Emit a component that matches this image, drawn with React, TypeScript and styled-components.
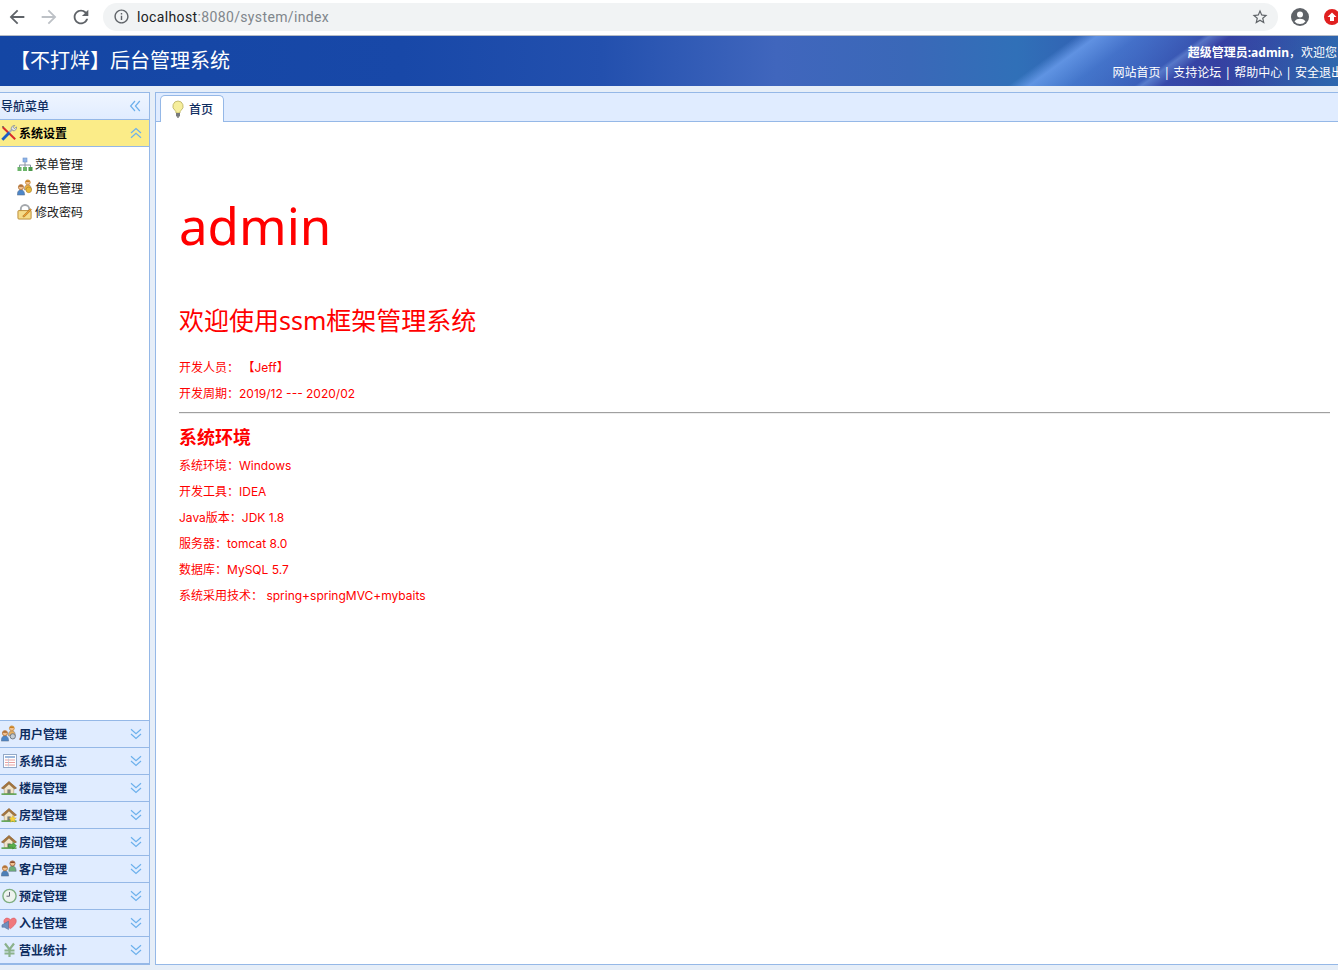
import React from "react";
import styled, { createGlobalStyle } from "styled-components";

const FONT = `"Noto Sans", "Noto Sans CJK SC", sans-serif`;

const Global = createGlobalStyle`
  html, body { margin: 0; padding: 0; height: 100%; overflow: hidden; background: #e6eef8; }
  #root { height: 100%; }
  * { box-sizing: border-box; }
`;

const Page = styled.div`
  width: 1338px; height: 970px; display: flex; flex-direction: column; overflow: hidden;
  font-family: ${FONT}; background: #e6eef8;
`;

const BrowserBar = styled.div`
  height: 36px; flex: none; display: flex; align-items: center; background: #fff;
  border-bottom: 1px solid #b6bcc6; padding: 0 0 2px 6px;
`;
const NavSlot = styled.span`
  flex: none; width: 32px; height: 22px; display: flex; align-items: center; justify-content: flex-start;
`;
const AddressPill = styled.div`
  flex: none; margin-left: 1px; width: 1175px; height: 28px; border-radius: 14px; background: #f1f3f4;
  display: flex; align-items: center; padding: 0 9px 0 10px; font-size: 14px; color: #80868b;
  font-family: "Roboto", sans-serif; letter-spacing: 0.36px;
`;
const Host = styled.span`color: #202124; margin-left: 7px;`;
const Spacer = styled.span`flex: 1;`;
const StatusIcons = styled.div`display: flex; flex: none; align-items: center; margin-left: 13px; gap: 15px;`;

const Header = styled.header`
  height: 50px; flex: none; display: flex; align-items: center; justify-content: space-between;
  padding-left: 12px; color: #fff; overflow: hidden;
  background:
    linear-gradient(144deg, transparent 76.5%, rgba(115,165,245,.7) 78%, rgba(85,135,225,.5) 81%, rgba(70,110,205,.35) 85.5%, rgba(130,170,240,.45) 86%, rgba(60,60,170,.35) 87.5%, transparent 96%),
    linear-gradient(90deg, #1446a4 0%, #1848a8 30%, #2350ae 45%, #4066bd 58%, #3a68b8 68%, #3070b8 76%, #3358b0 85%, #33429e 91%, #2e68ae 100%);
`;
const Title = styled.h1`
  margin: 0 0 2px -2px; font-size: 20px; font-weight: 400; line-height: 28px;
  font-family: "Noto Sans CJK SC", sans-serif;
`;
const UserBox = styled.div`
  flex: none; margin-right: -5px; text-align: right; font-size: 12px; line-height: 20px; padding-top: 3px;
  white-space: nowrap;
`;
const Greeting = styled.div`padding-right: 6px; b { font-weight: 700; }`;

const Body = styled.div`
  flex: 1; min-height: 0; display: flex; gap: 5px; padding: 6px 0 5px 0;
`;

const Side = styled.aside`
  width: 150px; flex: none; display: flex; flex-direction: column;
  border-right: 1px solid #95b8e7; border-top: 1px solid #95b8e7; border-bottom: 2px solid #95b8e7;
  background: #fff;
`;
const SideHead = styled.div`
  height: 26px; flex: none; display: flex; align-items: center; justify-content: space-between;
  padding: 0 8px 0 1px; font-size: 12px; color: #0e2d5f; font-weight: 500;
  background: linear-gradient(180deg, #eff5ff, #e0ecff);
`;
const AccTitle = styled.div<{ $active?: boolean }>`
  height: 27px; flex: none; display: flex; align-items: center; padding: 0 7px 0 1px;
  border-top: 1px solid #95b8e7; font-size: 12px; font-weight: 700;
  background: ${p => (p.$active ? "#fbec88" : "#e0ecff")};
  color: ${p => (p.$active ? "#000" : "#0e2d5f")};
`;
const AccName = styled.span`flex: 1; margin-left: 2px; margin-bottom: 1px;`;
const ActiveBody = styled.div`
  flex: 1; min-height: 0; border-top: 1px solid #95b8e7; padding-top: 5px; background: #fff;
`;
const Leaf = styled.div`
  height: 24px; display: flex; align-items: center; padding-left: 17px; gap: 2px;
  font-size: 12px; color: #1a1a1a;
`;
const IconBox = styled.span`width: 16px; height: 16px; display: flex; flex: none;`;

const Main = styled.main`
  flex: 1; min-width: 0; display: flex; flex-direction: column;
  border: 1px solid #95b8e7; border-right: none; background: #fff;
`;
const TabBar = styled.div`
  height: 29px; flex: none; background: #e0ecff; border-bottom: 1px solid #95b8e7;
  padding: 2px 0 0 4px; display: flex;
`;
const Tab = styled.div`
  width: 64px; height: 27px; background: #fff; border: 1px solid #95b8e7; border-bottom: none;
  border-radius: 5px 5px 0 0; display: flex; align-items: center; padding-left: 9px; gap: 3px;
  font-size: 12px; color: #0e2d5f; font-weight: 500;
`;
const Content = styled.div`
  flex: 1; padding: 0 8px 0 23px; color: #f00; display: flex; flex-direction: column;
  font-family: "Inter", "Noto Sans CJK SC", sans-serif;
`;
const Big = styled.h1`
  margin: 70px 0 0; font-size: 51px; line-height: 66px; font-weight: 400;
  font-family: ${FONT};
`;
const Sub = styled.h2`
  margin: 44px 0 0; font-size: 25px; line-height: 36px; font-weight: 400;
  font-family: ${FONT};
`;
const Line = styled.p<{ $mt?: number }>`
  margin: ${p => p.$mt ?? 0}px 0 0; font-size: 12px; line-height: 26px; white-space: pre;
`;
const Rule = styled.hr`
  margin: 5px 0 0; border: none; border-top: 1px solid #a0a0a0; border-bottom: 1px solid #eee; height: 2px; width: 100%;
`;
const H3 = styled.h3`
  margin: 10px 0 3px; font-size: 18px; line-height: 26px; font-weight: 700;
  font-family: ${FONT};
`;

const Mat = ({ d, size, color }: { d: string; size: number; color: string }) => (
  <svg width={size} height={size} viewBox="0 0 24 24"><path d={d} fill={color} /></svg>
);
const ARROW_BACK = "M20 11H7.83l5.59-5.59L12 4l-8 8 8 8 1.41-1.41L7.83 13H20v-2z";
const ARROW_FWD = "M12 4l-1.41 1.41L16.17 11H4v2h12.17l-5.58 5.59L12 20l8-8z";
const REFRESH = "M17.65 6.35A7.958 7.958 0 0 0 12 4c-4.42 0-7.99 3.58-7.99 8s3.57 8 7.99 8c3.73 0 6.84-2.55 7.73-6h-2.08A5.99 5.99 0 0 1 12 18c-3.31 0-6-2.69-6-6s2.69-6 6-6c1.66 0 3.14.69 4.22 1.78L13 11h7V4l-2.35 2.35z";
const STAR = "M22 9.24l-7.19-.62L12 2 9.19 8.63 2 9.24l5.46 4.73L5.82 21 12 17.27 18.18 21l-1.63-7.03L22 9.24zM12 15.4l-3.76 2.27 1-4.28-3.32-2.88 4.38-.38L12 6.1l1.71 4.04 4.38.38-3.32 2.88 1 4.28L12 15.4z";
const INFO = "M11 7h2v2h-2zm0 4h2v6h-2zm1-9C6.48 2 2 6.48 2 12s4.48 10 10 10 10-4.48 10-10S17.52 2 12 2zm0 18c-4.41 0-8-3.59-8-8s3.59-8 8-8 8 3.59 8 8-3.59 8-8 8z";

const Chevrons = ({ dir }: { dir: "up" | "down" | "left" }) => {
  const rot = dir === "down" ? 0 : dir === "up" ? 180 : 90;
  return (
    <svg width="12" height="12" viewBox="0 0 12 12">
      <g transform={`rotate(${rot} 6 6)`} fill="none" stroke="#6cb0ec" strokeWidth="1.2">
        <path d="M1 1.2 L6 5.6 L11 1.2" />
        <path d="M1 6 L6 10.4 L11 6" />
      </g>
    </svg>
  );
};

const Tools = () => (
  <svg width="18" height="18" viewBox="0 0 18 18" style={{ marginTop: -1 }}>
    <path d="M2 2.500 L16 16" stroke="#d92b2b" strokeWidth="2.300" />
    <path d="M1 1 L3.500 1.800 L2 3.500z" fill="#555" />
    <path d="M9 8.500 L13.500 4" stroke="#aab0b8" strokeWidth="2.200" />
    <path d="M11.500 4 A3.600 3.600 0 0 1 15.500 .5 L13.700 2.500 L15 4 L17.500 2.200 A3.600 3.600 0 0 1 13.500 6.500z" fill="#e4e7ec" stroke="#767d88" strokeWidth=".8" />
    <path d="M1.500 16.500 L9.500 8.500" stroke="#1c5fc4" strokeWidth="3.200" />
  </svg>
);
const OrgIcon = () => (
  <svg width="16" height="16" viewBox="0 0 16 16">
    <rect x="6" y="2" width="4" height="4" fill="#8db4e8" stroke="#6f93c8" strokeWidth=".6" />
    <path d="M8 6v3M2.500 11V9h11v2M8 9v2" fill="none" stroke="#8a94a4" />
    <rect x="0.500" y="11" width="4" height="4" fill="#6bb56a" />
    <rect x="6" y="11" width="4" height="4" fill="#6bb56a" />
    <rect x="11.500" y="11" width="4" height="4" fill="#4d9a4c" />
  </svg>
);
const Person = ({ x, y, s, c, hair = "#a8672c" }: { x: number; y: number; s: number; c: string; hair?: string }) => (
  <g transform={`translate(${x} ${y}) scale(${s})`}>
    <path d="M.3 11 C.3 7 2 5.600 4 5.600 S7.700 7 7.700 11z" fill={c} stroke="#5a6a80" strokeWidth=".5" />
    <circle cx="4" cy="3" r="2.600" fill="#f0c090" stroke={hair} strokeWidth=".7" />
    <path d="M1.500 2.600 A2.600 2.600 0 0 1 6.500 2.600z" fill={hair} />
  </g>
);
const RoleIcon = () => (
  <svg width="17" height="17" viewBox="0 0 17 17" style={{ marginTop: -1 }}>
    <Person x={7.500} y={0} s={1} c="#f0b040" hair="#c88020" />
    <Person x={0} y={5} s={1.050} c="#4d86c8" />
    <circle cx="12.500" cy="11" r="3" fill="#e8b83a" stroke="#a87a1c" strokeWidth=".6" />
  </svg>
);
const UserIcon = () => (
  <svg width="17" height="17" viewBox="0 0 17 17" style={{ marginTop: -1 }}>
    <Person x={7.500} y={0} s={1} c="#e8b060" hair="#c88020" />
    <Person x={0} y={5} s={1.050} c="#4d86c8" />
    <circle cx="12.500" cy="11.500" r="2.800" fill="#c4ccd4" stroke="#6c7680" strokeWidth="1" />
  </svg>
);
const LockIcon = () => (
  <svg width="17" height="16" viewBox="0 0 17 16">
    <path d="M4 7V5a4.500 4.500 0 0 1 9 0v2" fill="none" stroke="#a4a8ac" strokeWidth="2" />
    <rect x="1" y="6.500" width="14" height="9" rx="1" fill="#f6dc88" stroke="#b98a34" />
    <path d="M6 12.500l1.500 1L15.500 5.500 14 4.500z" fill="#f0a030" stroke="#8a5a1a" strokeWidth=".5" />
  </svg>
);
const LogIcon = () => (
  <svg width="16" height="16" viewBox="0 0 16 16">
    <rect x="2.500" y="1.500" width="13" height="13" fill="#fff" stroke="#93a9c8" />
    <rect x="4" y="3" width="10" height="2" fill="#9db8dc" />
    <path d="M4 7h10M4 9.500h10M4 12h10" stroke="#e8a0a0" strokeWidth="1" />
    <path d="M7.500 5.500v8" stroke="#bcd" strokeWidth=".8" />
  </svg>
);
const House = ({ badge }: { badge?: "star" | "arrow" }) => (
  <svg width="17" height="16" viewBox="0 0 17 16">
    <path d="M3.500 8.500 L8.500 4 L13.500 8.500 V14 H3.500z" fill="#f2e4c8" stroke="#a08a66" strokeWidth=".5" />
    <path d="M8.500 1 L.5 8 L2.500 9 L8.500 3.500 L14.500 9 L16.500 8 Z" fill="#a8763c" stroke="#7c5220" strokeWidth=".6" />
    <rect x="6.800" y="9.500" width="3.400" height="4.500" fill="#7d7d78" />
    <path d="M0.500 14.500h16" stroke="#4d9a3c" strokeWidth="1.500" />
    {badge === "star" && <path d="M12.500 8.500l1.200 2.400 2.600.3-1.900 1.800.5 2.600-2.400-1.300-2.400 1.300.5-2.600-1.900-1.800 2.600-.3z" fill="#f5d23c" stroke="#d0a020" strokeWidth=".4" />}
    {badge === "arrow" && <path d="M8 10.500h4.500V8.500L16.500 12l-4 3.500v-2H8z" fill="#58b04a" stroke="#2e7a28" strokeWidth=".5" />}
  </svg>
);
const CustomerIcon = () => (
  <svg width="17" height="17" viewBox="0 0 17 17" style={{ marginTop: -1 }}>
    <Person x={8} y={0} s={1.050} c="#6fae7a" hair="#8a4a2a" />
    <Person x={0} y={5} s={1.050} c="#4d7fb8" />
  </svg>
);
const ClockIcon = () => (
  <svg width="16" height="16" viewBox="0 0 16 16">
    <circle cx="8.500" cy="8" r="6.600" fill="#eef3ee" stroke="#7fae80" strokeWidth="1.400" />
    <path d="M8.500 4v4.200H5.500" fill="none" stroke="#667" strokeWidth="1" />
  </svg>
);
const HeartIcon = () => (
  <svg width="17" height="16" viewBox="0 0 17 16">
    <path d="M10 14 C4 10 2 7.500 3.500 4.500 C5 2 8 2.500 10 4.500 C12 2.500 15 2 16 4.500 C17 8 14 11 10 14z" fill="#f0787c" stroke="#d85660" strokeWidth=".6" />
    <path d="M1 10 L8 6 V15 L3.500 12.500 H1z" fill="#6f8fbf" stroke="#45648f" strokeWidth=".5" />
  </svg>
);
const YenIcon = () => (
  <svg width="16" height="16" viewBox="0 0 16 16">
    <path d="M4 1.500 L8.500 7.500 L13 1.500 M3.500 8.500h10M3.500 11.500h10M8.500 7.500V15" fill="none" stroke="#8cb28c" strokeWidth="2.200" />
  </svg>
);
const BulbIcon = () => (
  <svg width="16" height="18" viewBox="0 0 16 18">
    <path d="M8 1a5.200 5.200 0 0 0-3 9.400c.8.7 1 1.500 1 2.600h4c0-1.100.2-1.900 1-2.600A5.200 5.200 0 0 0 8 1z" fill="#f6ee9c" stroke="#b8ae60" strokeWidth=".8" />
    <rect x="6" y="13" width="4" height="3.400" fill="#77797c" />
    <path d="M7 17h2" stroke="#444" />
  </svg>
);
const ProfileIcon = () => (
  <svg width="18" height="18" viewBox="0 0 18 18">
    <circle cx="9" cy="9" r="9" fill="#5f6368" />
    <circle cx="9" cy="6.600" r="3" fill="#fff" />
    <path d="M3.500 13.500c1.300-2 3.300-2.700 5.500-2.700s4.200.7 5.500 2.700A7 7 0 0 1 9 16a7 7 0 0 1-5.500-2.500z" fill="#fff" />
  </svg>
);
const ExtIcon = () => (
  <svg width="16" height="16" viewBox="0 0 16 16">
    <circle cx="8" cy="8" r="8" fill="#e02020" />
    <path d="M8 3.500L12.500 8H10v4H6V8H3.500z" fill="#fff" />
  </svg>
);

const panels: { name: string; icon: React.ReactNode }[] = [
  { name: "用户管理", icon: <UserIcon /> },
  { name: "系统日志", icon: <LogIcon /> },
  { name: "楼层管理", icon: <House /> },
  { name: "房型管理", icon: <House badge="star" /> },
  { name: "房间管理", icon: <House badge="arrow" /> },
  { name: "客户管理", icon: <CustomerIcon /> },
  { name: "预定管理", icon: <ClockIcon /> },
  { name: "入住管理", icon: <HeartIcon /> },
  { name: "营业统计", icon: <YenIcon /> },
];

const leaves = [
  { name: "菜单管理", icon: <OrgIcon /> },
  { name: "角色管理", icon: <RoleIcon /> },
  { name: "修改密码", icon: <LockIcon /> },
];

export default function App() {
  return (
    <Page>
      <Global />
      <BrowserBar>
        <NavSlot><Mat d={ARROW_BACK} size={22} color="#5f6368" /></NavSlot>
        <NavSlot><Mat d={ARROW_FWD} size={22} color="#bdc1c6" /></NavSlot>
        <NavSlot><Mat d={REFRESH} size={22} color="#5f6368" /></NavSlot>
        <AddressPill>
          <Mat d={INFO} size={17} color="#5f6368" />
          <Host>localhost</Host>:8080/system/index
          <Spacer />
          <Mat d={STAR} size={18} color="#5f6368" />
        </AddressPill>
        <StatusIcons>
          <ProfileIcon />
          <ExtIcon />
        </StatusIcons>
      </BrowserBar>
      <Header>
        <Title>【不打烊】后台管理系统</Title>
        <UserBox>
          <Greeting><b>超级管理员:admin</b>，欢迎您</Greeting>
          <div>网站首页 | 支持论坛 | 帮助中心 | 安全退出</div>
        </UserBox>
      </Header>
      <Body>
        <Side>
          <SideHead>
            导航菜单
            <Chevrons dir="left" />
          </SideHead>
          <AccTitle $active>
            <IconBox><Tools /></IconBox>
            <AccName>系统设置</AccName>
            <Chevrons dir="up" />
          </AccTitle>
          <ActiveBody>
            {leaves.map(l => (
              <Leaf key={l.name}><IconBox>{l.icon}</IconBox>{l.name}</Leaf>
            ))}
          </ActiveBody>
          {panels.map(p => (
            <AccTitle key={p.name}>
              <IconBox>{p.icon}</IconBox>
              <AccName>{p.name}</AccName>
              <Chevrons dir="down" />
            </AccTitle>
          ))}
        </Side>
        <Main>
          <TabBar>
            <Tab><BulbIcon />首页</Tab>
          </TabBar>
          <Content>
            <Big>admin</Big>
            <Sub>欢迎使用ssm框架管理系统</Sub>
            <Line $mt={17}>开发人员： 【Jeff】</Line>
            <Line>开发周期：2019/12 --- 2020/02</Line>
            <Rule />
            <H3>系统环境</H3>
            <Line>系统环境：Windows</Line>
            <Line>开发工具：IDEA</Line>
            <Line>Java版本：JDK 1.8</Line>
            <Line>服务器：tomcat 8.0</Line>
            <Line>数据库：MySQL 5.7</Line>
            <Line>系统采用技术： spring+springMVC+mybaits</Line>
          </Content>
        </Main>
      </Body>
    </Page>
  );
}
